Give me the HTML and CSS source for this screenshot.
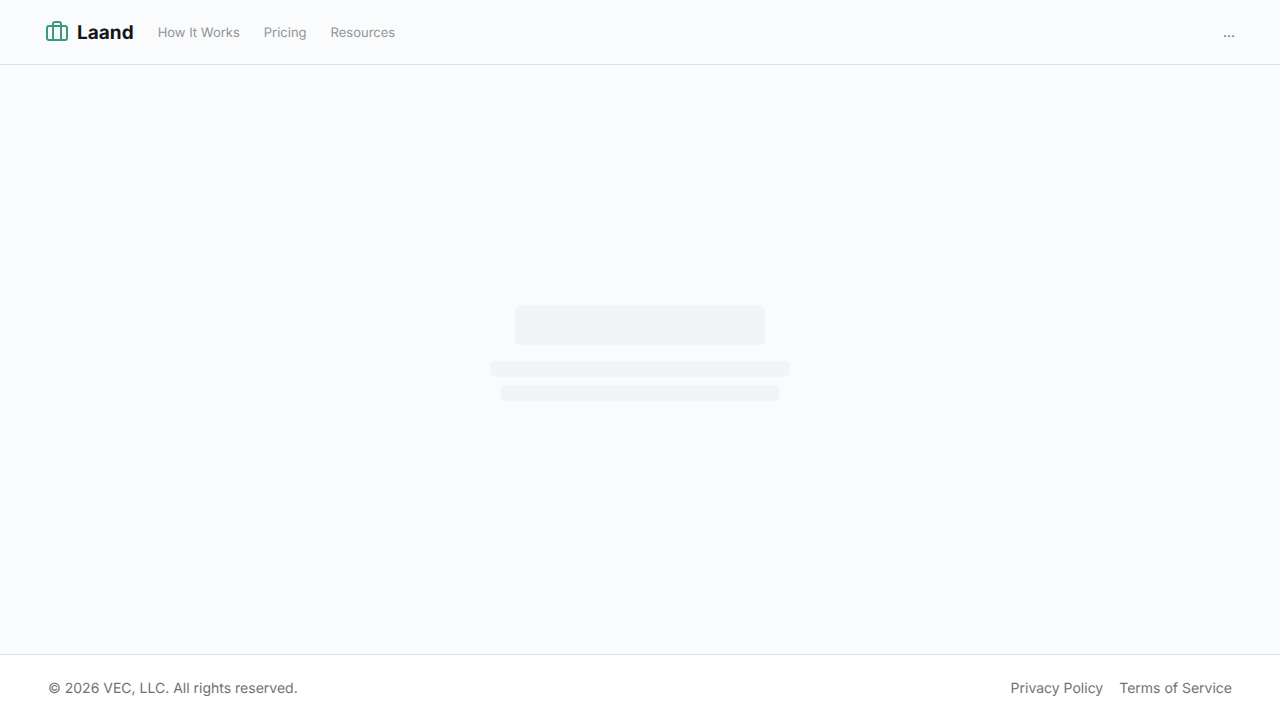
FILE: index.html
```html
<!DOCTYPE html>
<html lang="en">
<head>
    <meta charset="UTF-8">
    <meta name="viewport" content="width=device-width, initial-scale=1.0">
    <title>Laand</title>
    <link rel="stylesheet" href="styles.css">
</head>
<body>
    <header class="header">
        <a class="brand" href="#">
            <svg class="brand-icon" viewBox="0 0 24 24" fill="none" stroke="currentColor" stroke-width="2" stroke-linecap="round" stroke-linejoin="round" aria-hidden="true">
                <rect x="2" y="6" width="20" height="14" rx="2"/>
                <path d="M8 20V4a2 2 0 0 1 2-2h4a2 2 0 0 1 2 2v16"/>
            </svg>
            <span class="brand-name">Laand</span>
        </a>
        <nav class="nav">
            <a href="#">How It Works</a>
            <a href="#">Pricing</a>
            <a href="#">Resources</a>
        </nav>
        <div class="account">...</div>
    </header>

    <main class="content">
        <div class="skeleton skeleton-title"></div>
        <div class="skeleton skeleton-line"></div>
        <div class="skeleton skeleton-line short"></div>
    </main>

    <footer class="footer">
        <p>© 2026 VEC, LLC. All rights reserved.</p>
        <div class="footer-links">
            <a href="#">Privacy Policy</a>
            <a href="#">Terms of Service</a>
        </div>
    </footer>
</body>
</html>
```
FILE: styles.css
```css
* {
    box-sizing: border-box;
}

body {
    margin: 0;
    min-height: 100vh;
    display: flex;
    flex-direction: column;
    font-family: 'Inter', sans-serif;
    font-size: 14px;
    line-height: 20px;
    text-rendering: geometricPrecision;
    background-color: #fafbfd;
    color: #707276;
}

a {
    color: inherit;
    text-decoration: none;
}

.header {
    display: flex;
    align-items: center;
    gap: 24px;
    height: 65px;
    padding: 0 45px;
    border-bottom: 1px solid #dcdfe4;
}

.brand {
    display: flex;
    align-items: center;
    gap: 8px;
}

.brand-icon {
    width: 24px;
    height: 24px;
    color: #3a9a7e;
}

.brand-name {
    padding-top: 2px;
    font-size: 19px;
    line-height: 28px;
    font-weight: 700;
    color: #14151a;
}

.nav {
    display: flex;
    gap: 24px;
    padding-top: 2px;
    font-size: 13px;
    color: #949494;
}

.account {
    margin-left: auto;
    padding-top: 2px;
}

.content {
    flex: 1;
    display: flex;
    flex-direction: column;
    align-items: center;
    justify-content: center;
    padding-bottom: 14px;
}

.skeleton {
    background-color: #f3f4f7;
    border-radius: 6px;
}

.skeleton-title {
    width: 250px;
    height: 40px;
    margin-bottom: 16px;
}

.skeleton-line {
    width: 300px;
    height: 16px;
    margin-bottom: 8px;
}

.skeleton-line.short {
    width: 280px;
    margin-bottom: 0;
}

.footer {
    display: flex;
    align-items: center;
    justify-content: space-between;
    padding: 24px 48px 21px;
    border-top: 1px solid #dcdfe4;
    background-color: #ffffff;
}

.footer p {
    margin: 0;
}

.footer-links {
    display: flex;
    gap: 16px;
}
```
